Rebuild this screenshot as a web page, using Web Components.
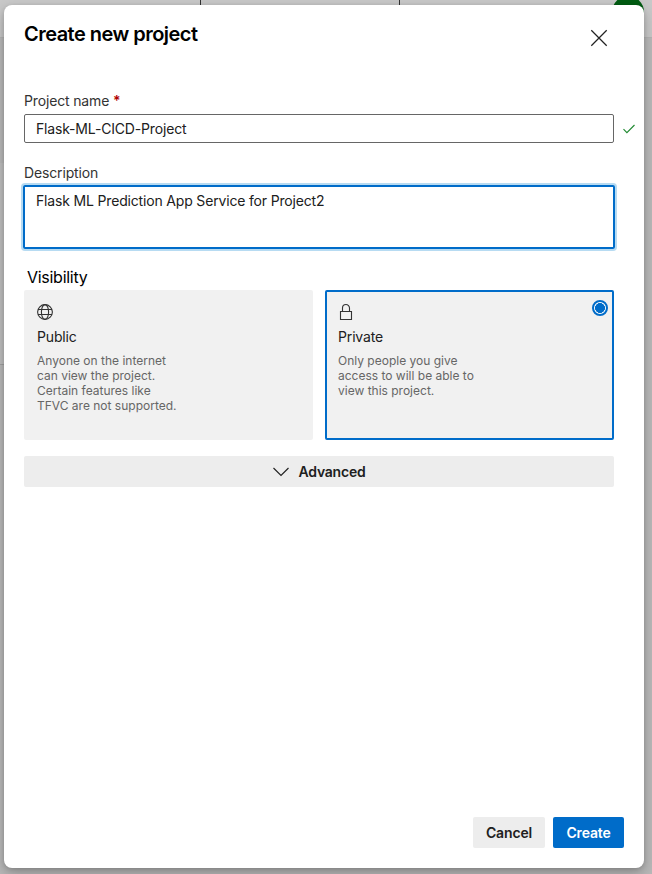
<!DOCTYPE html>
<html lang="en"><head><meta charset="utf-8"><title>Create new project</title>
<style>html,body{margin:0;height:100%;overflow:hidden}body{font:14px/20px Inter,"Liberation Sans",sans-serif;color:#202020}</style></head>
<body>
<project-page>
<project-dialog heading="Create new project">
<text-field label="Project name" required valid value="Flask-ML-CICD-Project"></text-field>
<text-field label="Description" multiline value="Flask ML Prediction App Service for Project2"></text-field>
<visibility-group>
<visibility-card heading="Public" icon="globe">Anyone on the internet<br>can view the project.<br>Certain features like<br>TFVC are not supported.</visibility-card>
<visibility-card heading="Private" icon="lock" selected>Only people you give<br>access to will be able to<br>view this project.</visibility-card>
</visibility-group>
<advanced-toggle>Advanced</advanced-toggle>
<action-button slot="footer" style="width:72px">Cancel</action-button>
<action-button slot="footer" primary style="width:71px">Create</action-button>
</project-dialog>
</project-page>
<script>
const define=(name,render)=>customElements.define(name,class extends HTMLElement{
  constructor(){super();this.attachShadow({mode:'open'})}
  connectedCallback(){this.shadowRoot.innerHTML='<style>*{box-sizing:border-box}svg{display:block}'+render(this)}
});
define('project-page',()=>`
:host{display:block;position:relative;box-sizing:border-box;height:874px;padding:5px 8px 6px 4px;background:linear-gradient(#c8c8c8 0 37px,#b4b4b4 37px 38px,#b9b9b9 38px);overflow:hidden}
i{position:absolute;top:0;width:1px;height:8px;background:#333}.a{left:200px}.b{left:399px}
b{position:absolute;left:612px;top:-4px;width:32px;height:32px;border-radius:50%;background:#005c12}
.edge{left:0;top:163px;width:5px;height:202px;background:#bfbfbf;border-bottom:1px solid #a2a2a2}
</style><i class="a"></i><i class="b"></i><i class="edge"></i><b></b><slot></slot>`);
define('project-dialog',e=>`
:host{display:flex;position:relative;box-sizing:border-box;flex-direction:column;height:863px;background:#fff;border-radius:8px;padding:0 20px 20px;box-shadow:0 6px 14px rgba(0,0,0,.24),0 1px 4px rgba(0,0,0,.13)}
header{display:flex;justify-content:space-between;height:86px;padding:15px 16px 0 0}
h1{margin:0;font-size:20px;line-height:28px;font-weight:600;letter-spacing:-.53px;color:#000}
header svg{margin-top:9px}
main{flex:1;width:590px}footer{display:flex;justify-content:flex-end;gap:8px}
</style><header><h1>${e.getAttribute('heading')}</h1><svg width="18" height="18" fill="none" stroke="#222" stroke-width="1.25"><path d="M1.3 1.3 16.7 16.7M16.7 1.3 1.3 16.7"/></svg></header><main><slot></slot></main><footer><slot name="footer"></slot></footer>`);
define('text-field',e=>{const m=e.hasAttribute('multiline');return `
:host{display:block;height:${m?'91px':'72px'}}
label{display:block;height:${m?'22px':'23px'};line-height:20px;color:#333;letter-spacing:-.15px}label span{color:#b00000;font-weight:600}
.row{display:flex;align-items:center;gap:9px;width:630px}
.field{flex:none;width:590px;height:29px;border:1px solid #666;border-radius:2px;padding:4px 11px;line-height:20px;color:#202020;letter-spacing:-.17px}
.multi{height:64px;border:2px solid #006cc9;padding:4px 11px;box-shadow:0 0 0 2px #b7dbf2;margin:0 -1px;width:592px}
</style><label>${e.getAttribute('label')}${e.hasAttribute('required')?' <span>*</span>':''}</label><div class="row"><div class="field ${m?'multi':''}">${e.getAttribute('value')}</div>${e.hasAttribute('valid')?'<svg width="12" height="10" fill="none" stroke="#218a32" stroke-width="1.15"><path d="m.5 5.2 3.4 3.4 7.6-7.6"/></svg>':''}</div>`});
define('visibility-group',()=>`
:host{display:block;height:189px;padding-top:13px}
h2{margin:0 0 0 3px;font-size:16px;line-height:20px;height:23px;font-weight:400;color:#000;letter-spacing:-.28px}
div{display:grid;grid-template-columns:289px 289px;gap:12px}
</style><h2>Visibility</h2><div><slot></slot></div>`);
const icons={
globe:'<svg width="18" height="18" fill="none" stroke="#333" stroke-width="1.1"><circle cx="9" cy="9" r="7.4"/><ellipse cx="9" cy="9" rx="3.6" ry="7.4"/><path d="M2 6.5h14M2 11.5h14"/></svg>',
lock:'<svg width="18" height="18" fill="none" stroke="#333" stroke-width="1.1"><path d="M3.5 8.5h11v8h-11zM5.5 8.5V5a3.5 3.5 0 0 1 7 0v3.5"/></svg>'};
define('visibility-card',e=>{const s=e.hasAttribute('selected');return `
:host{display:block;position:relative;box-sizing:border-box;height:150px;background:#f1f1f1;border-radius:2px;border:2px solid ${s?'#006cc9':'#f1f1f1'};padding:11px}
svg{margin-left:-1px}h3{margin:6px 0;font-size:14px;line-height:20px;font-weight:400;color:#202020;letter-spacing:-.15px}
p{margin:0;font-size:12px;line-height:15px;color:#666}
.radio{position:absolute;right:4px;top:8px;width:16px;height:16px;border:2px solid #006cc9;border-radius:50%;background:radial-gradient(circle,#006cc9 4.7px,#fff 5.2px)}
</style>${icons[e.getAttribute('icon')]}<h3>${e.getAttribute('heading')}</h3><p><slot></slot></p>${s?'<span class="radio"></span>':''}`});
define('advanced-toggle',()=>`
:host{display:flex;align-items:center;justify-content:center;gap:10px;height:31px;border-radius:2px;background:#ededed;font-weight:600;color:#202020;letter-spacing:-.22px}
</style><svg width="16" height="10" fill="none" stroke="#222" stroke-width="1.15"><path d="m.5 1 7.5 7.5L15.5 1"/></svg><slot></slot>`);
define('action-button',e=>{const p=e.hasAttribute('primary');return `
:host{display:flex;box-sizing:border-box;align-items:center;justify-content:center;height:31px;border-radius:2px;font-weight:600;letter-spacing:-.15px;color:${p?'#fff':'#202020'};background:${p?'#006cc9':'#ededed'}}
</style><slot></slot>`});
</script></body></html>
